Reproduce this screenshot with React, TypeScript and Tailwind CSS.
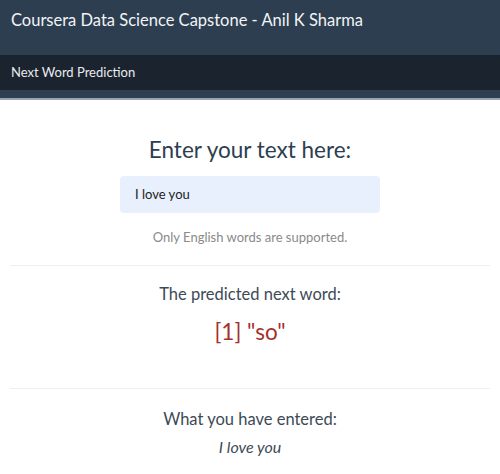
export default function App() {
  return (
    <div className="min-h-[474px] bg-white" style={{ fontFamily: 'Lato, "Open Sans", sans-serif' }}>
      <div className="bg-[#2c3e50] border-b-2 border-[#9aa3ad]">
        <div className="h-[55px] flex items-center px-[11px] text-[16.5px] text-[#f2f4f6] pb-[14px]">
          Coursera Data Science Capstone - Anil K Sharma
        </div>
        <div className="h-[35px] bg-[#1b242e] flex items-center px-[11px] text-[13px] text-[#e8ebee]">
          Next Word Prediction
        </div>
        <div className="h-[8px]" />
      </div>

      <div className="flex flex-col items-center text-[#2c3e50]">
        <h1 className="mt-[36px] text-[22.5px] leading-[28px]">Enter your text here:</h1>
        <div className="mt-[12px] w-[260px] h-[37px] bg-[#e8f0fe] rounded-[4px] flex items-center px-[15px] text-[13px] text-[#222]">
          I love you
        </div>
        <p className="mt-[15px] text-[13px] text-[#8a8a8a]">Only English words are supported.</p>
      </div>

      <div className="mx-[10px] mt-[17px] border-t border-[#eeeeee]" />

      <div className="flex flex-col items-center text-[#2c3e50]">
        <p className="mt-[17px] text-[16.5px] leading-[22px] text-[#3d4a56]">The predicted next word:</p>
        <p className="mt-[13px] text-[22.5px] leading-[28px] text-[#a6302b]">[1] "so"</p>
      </div>

      <div className="mx-[10px] mt-[42px] border-t border-[#eeeeee]" />

      <div className="flex flex-col items-center">
        <p className="mt-[19px] text-[16.5px] leading-[22px] text-[#3d4a56]">What you have entered:</p>
        <p className="mt-[5px] text-[16px] italic text-[#3d4a56]">I love you</p>
      </div>
    </div>
  );
}
